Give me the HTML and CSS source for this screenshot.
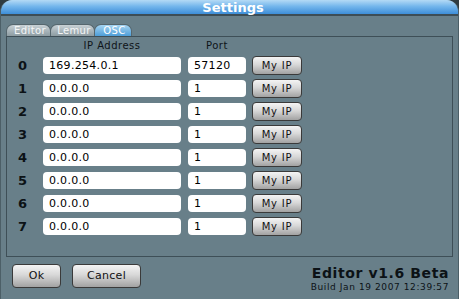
FILE: index.html
```html
<!DOCTYPE html>
<html>
<head>
<meta charset="utf-8">
<link rel="stylesheet" href="styles.css">
</head>
<body>
<div class="window">
  <div class="titlebar">Settings</div>
  <div class="tabs">
    <div class="tab t-editor">Editor</div>
    <div class="tab t-lemur">Lemur</div>
    <div class="tab t-osc active">OSC</div>
  </div>
  <div class="panel">
    <div class="head">
      <div class="h-num"></div>
      <div class="h-ip">IP Address</div>
      <div class="h-port">Port</div>
    </div>
    <div class="row"><div class="num">0</div><div class="field ip">169.254.0.1</div><div class="field port">57120</div><div class="btn myip">My IP</div></div>
    <div class="row"><div class="num">1</div><div class="field ip">0.0.0.0</div><div class="field port">1</div><div class="btn myip">My IP</div></div>
    <div class="row"><div class="num">2</div><div class="field ip">0.0.0.0</div><div class="field port">1</div><div class="btn myip">My IP</div></div>
    <div class="row"><div class="num">3</div><div class="field ip">0.0.0.0</div><div class="field port">1</div><div class="btn myip">My IP</div></div>
    <div class="row"><div class="num">4</div><div class="field ip">0.0.0.0</div><div class="field port">1</div><div class="btn myip">My IP</div></div>
    <div class="row"><div class="num">5</div><div class="field ip">0.0.0.0</div><div class="field port">1</div><div class="btn myip">My IP</div></div>
    <div class="row"><div class="num">6</div><div class="field ip">0.0.0.0</div><div class="field port">1</div><div class="btn myip">My IP</div></div>
    <div class="row"><div class="num">7</div><div class="field ip">0.0.0.0</div><div class="field port">1</div><div class="btn myip">My IP</div></div>
  </div>
  <div class="footer">
    <div class="btn big ok">Ok</div>
    <div class="btn big cancel">Cancel</div>
    <div class="about">
      <div class="version">Editor v1.6 Beta</div>
      <div class="build">Build Jan 19 2007 12:39:57</div>
    </div>
  </div>
</div>
</body>
</html>
```
FILE: styles.css
```css
html, body {
  margin: 0;
  padding: 0;
  background: #2f3c41;
}
body {
  font-family: "DejaVu Sans", Verdana, sans-serif;
  width: 459px;
  height: 299px;
  overflow: hidden;
}
.window {
  width: 459px;
  height: 299px;
  box-sizing: border-box;
  background: #687f89;
  border-radius: 12px 12px 0 0;
  border-left: 1px solid #4c5f67;
  border-right: 1px solid #4c5f67;
  overflow: hidden;
  display: flex;
  flex-direction: column;
}
.titlebar {
  height: 14px;
  line-height: 15px;
  background: linear-gradient(#b4daf5, #74b6ec 45%, #3e8ed8);
  border-bottom: 2px solid #3d4d55;
  color: #fff;
  font-weight: bold;
  font-size: 13px;
  text-align: center;
  margin: 0 -1px;
  padding-left: 7px;
}
.tabs {
  display: flex;
  margin-top: 8px;
  padding-left: 5px;
  height: 12px;
}
.tab {
  box-sizing: border-box;
  height: 12px;
  line-height: 12px;
  font-size: 10px;
  color: #f4f6f7;
  text-align: center;
  padding-left: 3px;
  border-radius: 7px 7px 0 0;
  background: linear-gradient(#c8d1d5, #8d9ca2);
  border: 1px solid #56676e;
  border-bottom: none;
  margin-right: -1px;
  letter-spacing: 0.4px;
}
.t-editor { width: 45px; }
.t-lemur { width: 45px; }
.t-osc { width: 38px; }
.tab.active {
  background: linear-gradient(#a4d4f2, #4e9ed8);
  color: #fff;
}
.panel {
  margin: 0 5px;
  height: 219px;
  border: 1px solid #3e4f57;
  display: flex;
  flex-direction: column;
  gap: 6px;
}
.head {
  display: flex;
  height: 13px;
  margin-top: 1px;
  font-size: 10px;
  line-height: 16px;
  color: #0e1418;
  letter-spacing: 0.5px;
}
.h-num { width: 36px; }
.h-ip { width: 138px; text-align: center; }
.h-port { width: 58px; margin-left: 7px; text-align: center; }
.row {
  display: flex;
  align-items: center;
  height: 17px;
}
.num {
  width: 25px;
  padding-left: 11px;
  font-weight: bold;
  font-size: 13px;
  color: #0c1216;
}
.field {
  height: 17px;
  line-height: 17px;
  background: #fff;
  border-radius: 4px;
  font-size: 11px;
  color: #000;
  padding-left: 6px;
  box-sizing: border-box;
  letter-spacing: 0.3px;
}
.ip { width: 138px; }
.port { width: 58px; margin-left: 7px; }
.btn {
  box-sizing: border-box;
  border: 1px solid #3a3a3a;
  border-radius: 4px;
  background: linear-gradient(#f4f4f4, #d8d8d8 45%, #a2a2a2);
  color: #111;
  text-align: center;
  letter-spacing: 0.8px;
}
.myip {
  width: 50px;
  height: 19px;
  line-height: 17px;
  margin-left: 6px;
  font-size: 10px;
}
.footer {
  display: flex;
  align-items: flex-start;
  margin-top: 6px;
  padding-left: 11px;
}
.big {
  height: 24px;
  line-height: 22px;
  font-size: 11px;
  letter-spacing: 0.3px;
  margin-top: 1px;
}
.ok { width: 49px; }
.cancel { width: 69px; margin-left: 11px; }
.about {
  margin-left: auto;
  margin-right: 9px;
  text-align: right;
  color: #0c1216;
  padding-top: 2px;
}
.version {
  font-weight: bold;
  font-size: 14px;
  line-height: 16px;
  letter-spacing: 0.6px;
}
.build {
  font-size: 9px;
  line-height: 13px;
  letter-spacing: 0.6px;
}
```
